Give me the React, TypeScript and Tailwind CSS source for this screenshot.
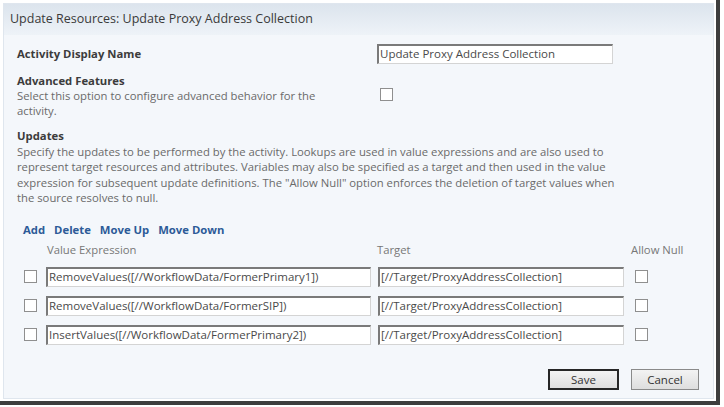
import React from 'react';

const font = { fontFamily: '"Open Sans", "Noto Sans", sans-serif' };

const Check: React.FC<{ className?: string }> = ({ className = '' }) => (
    <div className={`w-[13px] h-[13px] border border-[#8f8f8f] bg-white ${className}`} />
);

const Field: React.FC<{ value: string; className?: string }> = ({ value, className = '' }) => (
    <div
        className={`h-[20px] bg-white border border-[#d4d4d4] border-t-2 border-l-2 border-t-[#7a7a7a] border-l-[#7a7a7a] pl-[1px] text-[11.5px] leading-[16px] text-[#4a4a4a] whitespace-nowrap overflow-hidden ${className}`}
    >
        {value}
    </div>
);

const rows = [
    'RemoveValues([//WorkflowData/FormerPrimary1])',
    'RemoveValues([//WorkflowData/FormerSIP])',
    'InsertValues([//WorkflowData/FormerPrimary2])',
];

export default function App() {
    return (
        <div className="w-[724px] h-[407px] bg-white" style={font}>
            <div className="w-[720px] h-[405px] border-r-[4px] border-b-[4px] border-[#3d3d3d] pt-[3px] pl-[3px]">
                <div className="w-[711px] h-[396px] border border-[#dfe6ee] bg-[#f4f7fb] flex flex-col">
                    {/* Title */}
                    <div className="h-[31px] bg-gradient-to-b from-[#dce4ed] to-[#eef3f8] pl-[6px] flex items-center text-[12.5px] text-[#3a3a3a]">
                        Update Resources: Update Proxy Address Collection
                    </div>

                    <div className="pl-[13px] pr-[10px] text-[11.3px]">
                        {/* Activity Display Name */}
                        <div className="flex items-center mt-[9px] h-[20px]">
                            <div className="w-[360px] font-bold text-[#3c3c3c]">Activity Display Name</div>
                            <Field value="Update Proxy Address Collection" className="w-[236px]" />
                        </div>

                        {/* Advanced Features */}
                        <div className="flex mt-[9px]">
                            <div className="w-[310px] leading-[15px]">
                                <div className="font-bold text-[#3c3c3c]">Advanced Features</div>
                                <div className="text-[#6a6a6a]">Select this option to configure advanced behavior for the activity.</div>
                            </div>
                            <Check className="ml-[53px] mt-[15px]" />
                        </div>

                        {/* Updates */}
                        <div className="mt-[10px] leading-[15.6px]">
                            <div className="font-bold text-[#3c3c3c]">Updates</div>
                            <div className="text-[#6a6a6a] w-[600px]">
                                Specify the updates to be performed by the activity. Lookups are used in value expressions and are also used to represent target resources and attributes. Variables may also be specified as a target and then used in the value expression for subsequent update definitions. The "Allow Null" option enforces the deletion of target values when the source resolves to null.
                            </div>
                        </div>

                        {/* Toolbar */}
                        <div className="flex gap-[9px] mt-[16px] ml-[6px] font-bold text-[#2d5b98] text-[11.3px]">
                            <span>Add</span>
                            <span>Delete</span>
                            <span>Move Up</span>
                            <span>Move Down</span>
                        </div>

                        {/* Grid */}
                        <div className="flex text-[#777] mt-[3px] h-[18px] items-center">
                            <div className="w-[360px] pl-[30px]">Value Expression</div>
                            <div className="w-[254px]">Target</div>
                            <div>Allow Null</div>
                        </div>
                        <div className="flex flex-col gap-[9px] mt-[7px]">
                            {rows.map((r) => (
                                <div key={r} className="flex items-center">
                                    <Check className="ml-[7px]" />
                                    <Field value={r} className="ml-[9px] w-[325px]" />
                                    <Field value="[//Target/ProxyAddressCollection]" className="ml-[7px] w-[246px]" />
                                    <Check className="ml-[11px]" />
                                </div>
                            ))}
                        </div>
                    </div>

                    {/* Buttons */}
                    <div className="flex justify-end gap-[12px] mt-[24px] pr-[14px] text-[11.5px] text-[#333]">
                        <button className="w-[71px] h-[21px] border-2 border-[#262626] bg-gradient-to-b from-[#f3f3f3] to-[#dedede]">Save</button>
                        <button className="w-[68px] h-[21px] border border-[#8a8a8a] bg-gradient-to-b from-[#f3f3f3] to-[#dedede]">Cancel</button>
                    </div>
                </div>
            </div>
        </div>
    );
}
